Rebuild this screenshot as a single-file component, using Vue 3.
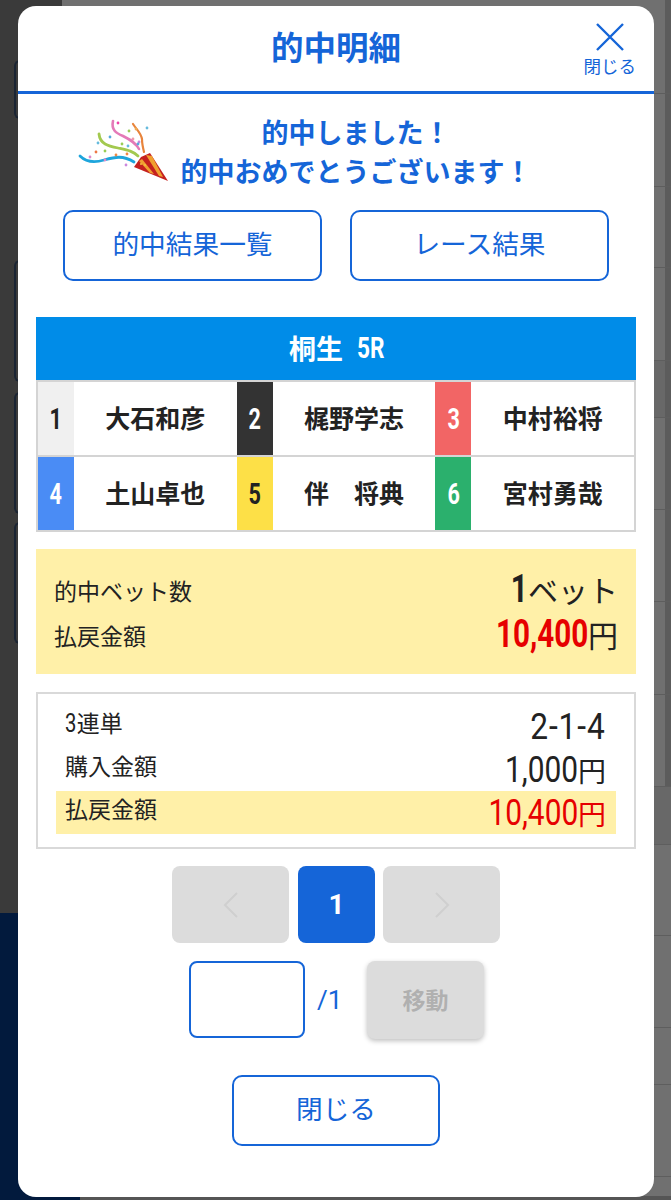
<script setup>
const racers = [
  { no: 1, name: '大石和彦', cls: 'n1' },
  { no: 2, name: '梶野学志', cls: 'n2' },
  { no: 3, name: '中村裕将', cls: 'n3' },
  { no: 4, name: '土山卓也', cls: 'n4' },
  { no: 5, name: '伴　将典', cls: 'n5' },
  { no: 6, name: '宮村勇哉', cls: 'n6' }
]

const lines = [93, 186, 267, 360, 417, 509, 601, 694, 786, 844, 935, 1027, 1084, 1176]

const dots = [
  [49, 13, '#e4a'], [60, 21, '#9c5'], [67, 19, '#ea5'], [78, 18, '#6bd'], [70, 32, '#c8d'],
  [41, 27, '#5ad'], [29, 33, '#6bd'], [53, 34, '#9c5'], [59, 36, '#6bd'], [64, 29, '#e9a'],
  [36, 41, '#9c5'], [27, 42, '#e74'], [47, 45, '#e84'], [58, 44, '#e84'], [21, 47, '#d8c'],
  [36, 50, '#d8c'], [57, 55, '#c8d'], [69, 34, '#5ad']
]
</script>

<template>
  <div class="page">
    <div class="backdrop">
      <div class="bg-left"></div>
      <div class="bg-main"></div>
      <div class="bg-navy"></div>
      <span class="bg-band band1"></span>
      <span class="bg-band band2"></span>
      <span v-for="y in lines" :key="y" class="bg-line" :style="{ top: y + 'px' }"></span>
      <span class="bg-tab tab1"></span>
      <span class="bg-tab tab2"></span>
      <span class="bg-tab tab3"></span>
      <span class="bg-tab tab4"></span>
      <div class="bg-bottom">獲得勝場 / リムラスフォーム</div>
    </div>

    <div class="modal">
      <header class="head">
        <h1>的中明細</h1>
        <button class="x">
          <svg width="30" height="28" viewBox="0 0 30 28">
            <path d="M2 1L28 27M28 1L2 27" stroke="#1565d8" stroke-width="2.4" fill="none" />
          </svg>
          <span>閉じる</span>
        </button>
      </header>

      <div class="body">
        <div class="hit">
          <svg class="popper" width="110" height="80" viewBox="0 0 110 80">
            <path d="M11 46c6 6 14 7 24 4 11-3 19-5 30 2" stroke="#1ea5dc" stroke-width="2.8" fill="none" stroke-linecap="round" />
            <path d="M30 24c1 10 9 12 19 14 9 2 15 3 20 8" stroke="#a3c94f" stroke-width="2.8" fill="none" stroke-linecap="round" />
            <path d="M44 11c-2 9 3 12 10 15 8 4 13 7 16 13" stroke="#e47ab8" stroke-width="2.6" fill="none" stroke-linecap="round" />
            <path d="M64 14c4 6 8 9 9 15 0 5 1 9 2 13" stroke="#e8843c" stroke-width="2.2" fill="none" stroke-linecap="round" />
            <circle v-for="(d, i) in dots" :key="i" :cx="d[0]" :cy="d[1]" r="1.4" :fill="d[2]" />
            <path d="M65 57L72 47L81 43L99 71Z" fill="#c5211f" />
            <path d="M77 45L83 46L94 67L90 66Z" fill="#f0a030" />
            <path d="M70 51L73 49L85 64L81 63Z" fill="#f0a030" />
            <circle cx="76" cy="55" r="1" fill="#f5c040" />
            <circle cx="72" cy="54" r="1" fill="#f5c040" />
          </svg>
          <p>的中しました！<br />的中おめでとうございます！</p>
        </div>

        <div class="links">
          <a class="btn">的中結果一覧</a>
          <a class="btn">レース結果</a>
        </div>

        <div class="race-title">桐生<span class="num race-no">5R</span></div>
        <div class="racers">
          <div v-for="r in racers" :key="r.no" class="racer">
            <span class="no" :class="r.cls"><i class="num">{{ r.no }}</i></span>
            <span class="name">{{ r.name }}</span>
          </div>
        </div>

        <div class="summary">
          <div class="sum-row">
            <span>的中ベット数</span>
            <span class="sum-val"><b class="num">1</b>ベット</span>
          </div>
          <div class="sum-row">
            <span>払戻金額</span>
            <span class="sum-val"><b class="num red">10,400</b>円</span>
          </div>
        </div>

        <div class="detail">
          <div class="det-row">
            <span class="det-label"><i class="num three">3</i>連単</span>
            <span class="det-val"><i class="num score">2-1-4</i></span>
          </div>
          <div class="det-row">
            <span class="det-label">購入金額</span>
            <span class="det-val"><i class="num">1,000</i>円</span>
          </div>
          <div class="det-row pay">
            <span class="det-label">払戻金額</span>
            <span class="det-val red"><i class="num">10,400</i>円</span>
          </div>
        </div>

        <div class="pager">
          <button class="pg arrow">
            <svg width="16" height="26" viewBox="0 0 16 26"><path d="M14 1L2 13L14 25" stroke="#cfcfcf" stroke-width="2" fill="none" /></svg>
          </button>
          <button class="pg cur">1</button>
          <button class="pg arrow">
            <svg width="16" height="26" viewBox="0 0 16 26"><path d="M2 1L14 13L2 25" stroke="#cfcfcf" stroke-width="2" fill="none" /></svg>
          </button>
        </div>

        <div class="jump">
          <input class="page-input" type="text" />
          <span class="total">/1</span>
          <button class="move">移動</button>
        </div>

        <a class="btn close">閉じる</a>
      </div>
    </div>
  </div>
</template>

<style>
body {
  margin: 0;
}
</style>

<style scoped>
.page {
  position: relative;
  width: 671px;
  height: 1200px;
  overflow: hidden;
  background: #707070;
  font-family: "Noto Sans CJK JP", sans-serif;
  color: #222;
}

.backdrop div,
.bg-tab,
.bg-line,
.bg-band {
  position: absolute;
}

.bg-left {
  left: 0;
  top: 0;
  width: 62px;
  height: 913px;
  background: #3a3a3a;
}

.bg-main {
  left: 62px;
  top: 0;
  width: 609px;
  height: 817px;
  background: linear-gradient(90deg, #707070 0, #707070 603px, #5c5c5c 603px);
}

.bg-navy {
  left: 0;
  top: 913px;
  width: 80px;
  height: 287px;
  background: #021a3d;
}

.bg-line {
  left: 654px;
  width: 17px;
  height: 1px;
  background: #5e5e5e;
}

.bg-band {
  left: 654px;
  width: 11px;
  background: #686868;
}

.band1 { top: 360px; height: 57px; }
.band2 { top: 786px; height: 58px; width: 17px; }

.bg-tab {
  left: 14px;
  width: 8px;
  border: 2px solid #1a2433;
  border-right: 0;
  border-radius: 6px 0 0 6px;
}

.tab1 { top: 60px; height: 55px; }
.tab2 { top: 260px; height: 118px; }
.tab3 { top: 392px; height: 118px; }
.tab4 { top: 522px; height: 118px; }

.bg-bottom {
  left: 80px;
  top: 1196px;
  width: 591px;
  height: 4px;
  overflow: hidden;
  background: #555;
  color: #111;
  font-size: 24px;
  line-height: 30px;
  font-weight: 700;
  padding-left: 20px;
  box-sizing: border-box;
}

.modal {
  position: absolute;
  left: 18px;
  top: 6px;
  width: 636px;
  height: 1191px;
  background: #fff;
  border-radius: 18px;
  overflow: hidden;
}

.head {
  position: relative;
  height: 85px;
  border-bottom: 3px solid #1565d8;
  display: flex;
  align-items: center;
  justify-content: center;
}

h1 {
  margin: 0;
  font-size: 32.5px;
  font-weight: 700;
  color: #1565d8;
  line-height: 1;
  padding-bottom: 4px;
}

.x {
  position: absolute;
  right: 18px;
  top: 17px;
  padding: 0;
  border: 0;
  background: none;
  display: flex;
  flex-direction: column;
  align-items: center;
  font-family: inherit;
  font-size: 17.5px;
  line-height: 20px;
  color: #1565d8;
  gap: 5px;
}

.body {
  padding: 0 18px;
}

.hit {
  position: relative;
  height: 116px;
  text-align: center;
}

.popper {
  position: absolute;
  left: 33px;
  top: 16px;
}

.hit p {
  margin: 0;
  padding: 18px 0 0 40px;
  font-size: 27px;
  line-height: 39px;
  font-weight: 700;
  color: #1565d8;
}

.btn {
  box-sizing: border-box;
  display: flex;
  align-items: center;
  justify-content: center;
  border: 2px solid #1565d8;
  border-radius: 10px;
  background: #fff;
  color: #1565d8;
  font-size: 26.7px;
}

.links {
  display: flex;
  gap: 28px;
  padding: 0 27px;
}

.links .btn {
  flex: 1;
  height: 71px;
  padding-bottom: 6px;
}

.race-title {
  margin-top: 36px;
  height: 63px;
  padding-bottom: 2px;
  box-sizing: border-box;
  display: flex;
  align-items: center;
  justify-content: center;
  gap: 14px;
  background: #008ce8;
  color: #fff;
  font-size: 27px;
  font-weight: 700;
}

.num {
  display: inline-block;
  font-family: Roboto, sans-serif;
  font-style: normal;
  transform: scaleX(0.78);
  transform-origin: right center;
}

.race-no {
  font-size: 29px;
  transform-origin: left center;
  margin-right: -9px;
}

.racers {
  display: grid;
  grid-template-columns: repeat(3, 1fr);
  background: #d4d4d4;
  padding: 2px;
  row-gap: 2px;
}

.racer {
  height: 73px;
  display: flex;
  background: #fff;
}

.no {
  width: 36px;
  display: flex;
  align-items: center;
  justify-content: center;
  font-size: 30px;
  font-weight: 700;
}

.no .num {
  transform-origin: center;
  transform: scaleX(0.72);
}

.name {
  flex: 1;
  text-align: center;
  font-size: 25px;
  font-weight: 700;
  line-height: 71px;
}

.n1 { background: #f0f0f0; color: #222; }
.n2 { background: #333; color: #fff; }
.n3 { background: #f26565; color: #fff; }
.n4 { background: #4a8cf5; color: #fff; }
.n5 { background: #fde047; color: #222; }
.n6 { background: #2bb06d; color: #fff; }

.summary {
  box-sizing: border-box;
  margin-top: 17px;
  height: 125px;
  padding: 18px 18px 0;
  background: #fff0a8;
}

.sum-row {
  display: flex;
  justify-content: space-between;
  align-items: center;
  height: 45px;
  font-size: 23px;
  line-height: 36px;
}

.sum-val {
  font-size: 30px;
  line-height: 44px;
  margin-top: -2px;
}

.sum-val b {
  font-size: 38px;
  line-height: 44px;
}

.red {
  color: #e60000;
}

.detail {
  box-sizing: border-box;
  margin-top: 18px;
  height: 157px;
  padding: 11px 18px 0;
  border: 2px solid #d9d9d9;
}

.det-row {
  display: flex;
  justify-content: space-between;
  align-items: center;
  height: 43px;
  padding: 0 10px;
  font-size: 23px;
}

.det-label {
  margin: -9px 0 0 -1px;
}

.three {
  font-size: 26px;
  line-height: 1;
  transform-origin: left center;
  margin-right: -3px;
}

.det-val {
  font-size: 28px;
  line-height: 40px;
}

.det-val .num {
  font-size: 36px;
  line-height: 40px;
  transform: scaleX(0.83);
}

.det-val .score {
  letter-spacing: 1px;
  transform: scaleX(0.88);
}

.pay {
  background: #fff0a8;
}

.pager {
  display: flex;
  gap: 8px;
  margin: 17px 0 0 136px;
}

.pg {
  height: 77px;
  border: 0;
  border-radius: 8px;
  padding: 0;
  display: flex;
  align-items: center;
  justify-content: center;
}

.arrow {
  width: 117px;
  background: #dcdcdc;
}

.cur {
  width: 77px;
  margin-left: 1px;
  background: #1565d8;
  color: #fff;
  font-family: Roboto, sans-serif;
  font-size: 28px;
  font-weight: 700;
}

.jump {
  display: flex;
  align-items: flex-start;
  margin: 18px 0 0 153px;
}

.page-input {
  box-sizing: border-box;
  width: 116px;
  height: 77px;
  border: 2px solid #1565d8;
  border-radius: 8px;
  background: #fff;
}

.total {
  align-self: center;
  width: 62px;
  padding-left: 12px;
  box-sizing: border-box;
  font-family: Roboto, sans-serif;
  font-size: 26px;
  color: #1565d8;
}

.move {
  width: 117px;
  height: 78px;
  padding-bottom: 4px;
  border: 0;
  border-radius: 8px;
  background: #dcdcdc;
  color: #b0b0b0;
  font-family: inherit;
  font-size: 23px;
  font-weight: 700;
  box-shadow: 0 2px 5px rgba(0, 0, 0, 0.25);
}

.close {
  width: 208px;
  height: 71px;
  margin: 36px 0 0 196px;
  padding-bottom: 6px;
}
</style>
